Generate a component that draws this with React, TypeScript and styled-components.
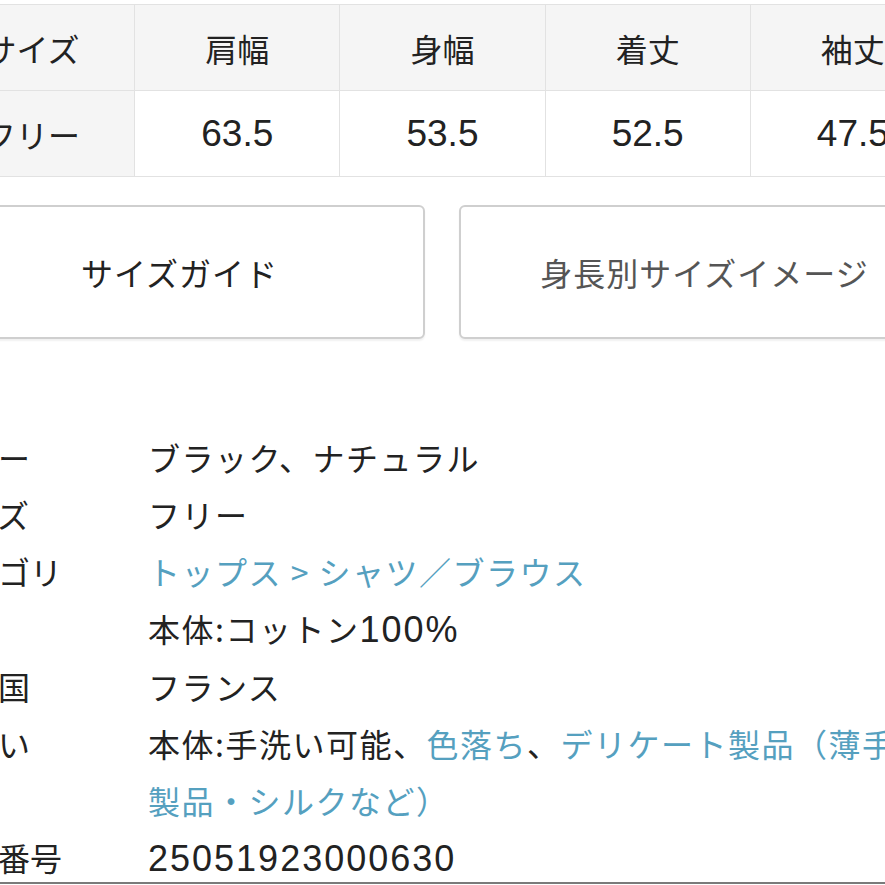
import React from "react";
import styled, { createGlobalStyle } from "styled-components";

const GlobalStyle = createGlobalStyle`
  html, body {
    margin: 0;
    padding: 0;
    background: #fff;
    overflow: hidden;
  }
  body {
    width: 885px;
    height: 885px;
    font-family: "Liberation Sans", "Noto Sans CJK JP", sans-serif;
    color: #222;
  }
`;

const Page = styled.div`
  width: 885px;
  height: 885px;
  position: relative;
  overflow: hidden;
`;

// the page is cut off on the left, so the content runs past both edges
const Content = styled.div`
  margin-left: -71px;
  width: 1027px;
  padding-top: 4px;
`;

const SizeTable = styled.table`
  width: 1027px;
  border-collapse: collapse;
  table-layout: fixed;
`;

const Cell = styled.td<{ head?: boolean }>`
  height: 85px;
  padding: 0;
  border: 1.5px solid #e2e2e2;
  text-align: center;
  vertical-align: middle;
  background: ${(p) => (p.head ? "#f5f5f5" : "#fff")};
  font-size: ${(p) => (p.head ? "32px" : "37px")};
  color: #222;
`;

const ButtonRow = styled.div`
  display: flex;
  gap: 34px;
  margin-top: 28px;
  padding-left: 5px;
`;

const GuideButton = styled.button<{ muted?: boolean }>`
  width: 491px;
  height: 134px;
  background: #fff;
  border: 2px solid #cfcfcf;
  border-radius: 6px;
  box-shadow: 0 2px 2px rgba(0, 0, 0, 0.06);
  font-family: "Noto Sans CJK JP", sans-serif;
  font-size: 32px;
  letter-spacing: 1px;
  color: ${(p) => (p.muted ? "#555" : "#222")};
  padding: 0;
`;

const SpecList = styled.dl`
  margin: 90px 0 0 5px;
  display: grid;
  grid-template-columns: 214px 1fr;
  font-size: 32px;
  line-height: 57px;
`;

const Label = styled.dt`
  margin: 0;
  font-family: "Noto Sans CJK JP", sans-serif;
  white-space: nowrap;
`;

const Value = styled.dd`
  margin: 0;
  font-family: "Noto Sans CJK JP", sans-serif;
  letter-spacing: 1.5px;
  width: 765px;
  line-break: anywhere;
`;

const Num = styled.span`
  font-family: "Liberation Sans", sans-serif;
  font-size: 36px;
  letter-spacing: 2px;
`;

const Link = styled.span`
  color: #55a0bf;
`;

const BottomLine = styled.div`
  position: absolute;
  left: 0;
  right: 0;
  bottom: 1px;
  height: 2px;
  background: #7a7a7a;
`;

const heads = ["サイズ", "肩幅", "身幅", "着丈", "袖丈"];
const values = ["63.5", "53.5", "52.5", "47.5"];

export default function App() {
  return (
    <Page>
      <GlobalStyle />
      <Content>
        <SizeTable>
          <tbody>
            <tr>
              {heads.map((h) => (
                <Cell head key={h}>{h}</Cell>
              ))}
            </tr>
            <tr>
              <Cell head>フリー</Cell>
              {values.map((v) => (
                <Cell key={v}>{v}</Cell>
              ))}
            </tr>
          </tbody>
        </SizeTable>

        <ButtonRow>
          <GuideButton>サイズガイド</GuideButton>
          <GuideButton muted>身長別サイズイメージ</GuideButton>
        </ButtonRow>

        <SpecList>
          <Label>カラー</Label>
          <Value>ブラック、ナチュラル</Value>
          <Label>サイズ</Label>
          <Value>フリー</Value>
          <Label>カテゴリ</Label>
          <Value>
            <Link>トップス &gt; シャツ／ブラウス</Link>
          </Value>
          <Label>素材</Label>
          <Value>
            本体:コットン<Num>100%</Num>
          </Value>
          <Label>原産国</Label>
          <Value>フランス</Value>
          <Label>取扱い</Label>
          <Value>
            本体:手洗い可能、<Link>色落ち</Link>、<Link>デリケート製品（薄手製品・シルクなど）</Link>
          </Value>
          <Label>商品番号</Label>
          <Value>
            <Num>25051923000630</Num>
          </Value>
        </SpecList>
      </Content>
      <BottomLine />
    </Page>
  );
}
